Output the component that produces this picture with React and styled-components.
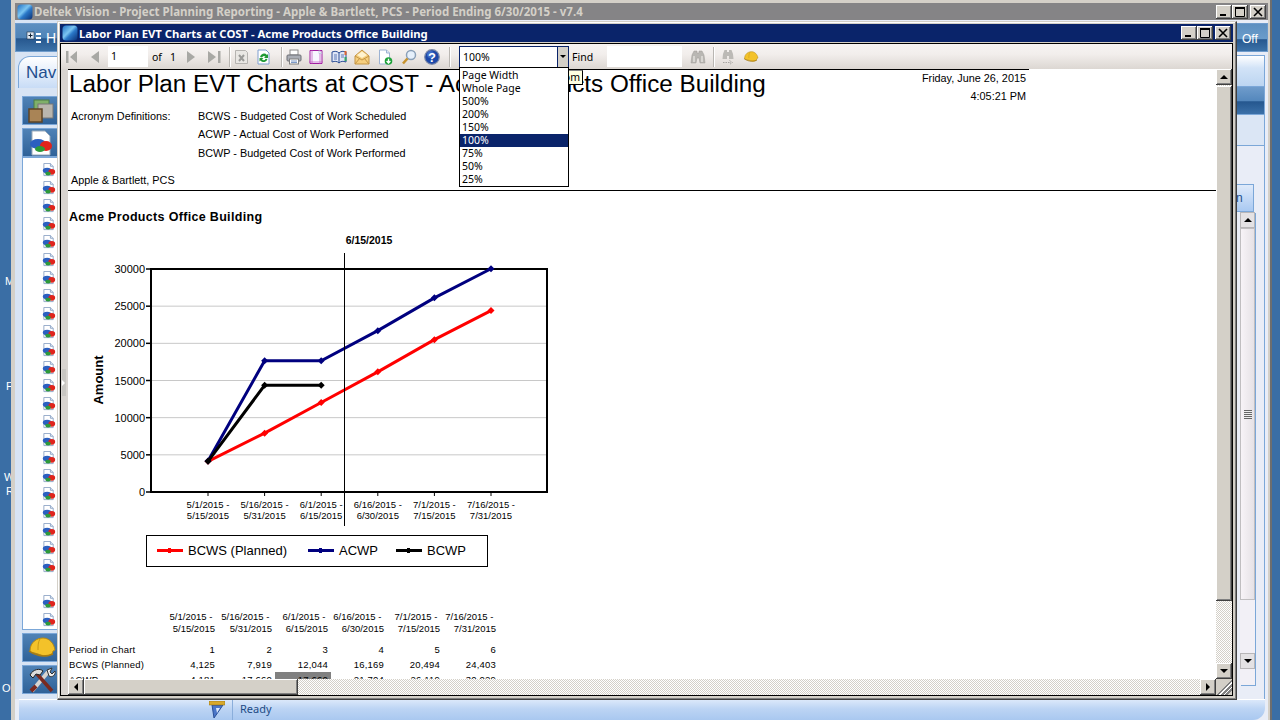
import React from "react";
import styled, { createGlobalStyle, css } from "styled-components";

const Global = createGlobalStyle`
  html, body { margin: 0; padding: 0; width: 1280px; height: 720px; overflow: hidden; background: #3a6ea5; }
  #root { width: 1280px; height: 720px; }
  * { box-sizing: border-box; }
`;

const SANS = `"Liberation Sans", Arial, sans-serif`;
const TAHOMA = `"Noto Sans", "Open Sans", sans-serif`;

const bevel = css`
  background: #d4d0c8;
  box-shadow: inset -1px -1px 0 #404040, inset 1px 1px 0 #fff, inset -2px -2px 0 #808080;
`;
const dither = css`
  background-color: #fff;
  background-image: conic-gradient(#d4d0c8 25%, #fff 0 50%, #d4d0c8 0 75%, #fff 0);
  background-size: 2px 2px;
`;

const Desktop = styled.div`
  position: relative;
  width: 1280px;
  height: 720px;
  display: flex;
  background: #3a6ea5;
  overflow: hidden;
  font-family: ${SANS};
`;
const DesktopStrip = styled.div`
  width: 11px;
  flex: none;
  display: flex;
  flex-direction: column;
  color: #fff;
  font: 11px ${SANS};
  line-height: 14px;
`;
const StripLetter = styled.span`
  margin-top: ${p => p.$top}px;
  margin-left: ${p => p.$left}px;
  height: 14px;
`;

const AppWindow = styled.div`
  width: 1259px;
  flex: none;
  display: flex;
  flex-direction: column;
  background: #e9edf7;
  border-left: 4px solid #d4d0c8;
  border-right: 2px solid #d4d0c8;
  border-top: 3px solid #d4d0c8;
`;
const WindowEdge = styled.div`
  width: 2px;
  flex: none;
  background: #6e6e6e;
`;
const AppTitle = styled.div`
  height: 17px;
  flex: none;
  background: #858486;
  display: flex;
  align-items: center;
  padding-left: 2px;
  color: #d4d0c8;
  font: bold 11.5px ${TAHOMA};
`;
const Logo = styled.svg`
  width: 16px;
  height: 16px;
  flex: none;
  margin-right: 1px;
`;
const TitleText = styled.span`
  flex: 1;
  white-space: nowrap;
`;
const CaptionButtons = styled.div`
  display: flex;
  align-items: center;
  margin-right: 2px;
`;
const CaptionButton = styled.div`
  ${bevel}
  width: 16px;
  height: 14px;
  margin-left: ${p => p.$gap || 0}px;
  display: flex;
  align-items: center;
  justify-content: center;
`;

const AppBody = styled.div`
  flex: 1;
  display: flex;
  min-height: 0;
  background: #e9edf7;
`;
const NavColumn = styled.div`
  width: 49px;
  flex: none;
  padding: 3px 0 0 0;
  display: flex;
  flex-direction: column;
  background: #d8e4f4;
  overflow: hidden;
`;
const NavTop = styled.div`
  height: 29px;
  flex: none;
  background: linear-gradient(#5d8fc0 0%, #4f84b8 50%, #27588f 55%, #3c72a8 100%);
  border: 1px solid #6f9ccc;
  color: #fff;
  font: 14px ${SANS};
  display: flex;
  align-items: center;
  padding-left: 10px;
  gap: 4px;
  white-space: nowrap;
`;
const NavTab = styled.div`
  height: 32px;
  margin: 4px 0 0 3px;
  flex: none;
  border: 1px solid #7ba7d8;
  border-bottom: none;
  border-radius: 12px 0 0 0;
  background: linear-gradient(#fff, #c8dcf6);
  color: #1f4e8e;
  font: 17px ${SANS};
  padding: 6px 0 0 7px;
  white-space: nowrap;
`;
const NavPane = styled.div`
  flex: 1;
  margin: 8px 0 0 7px;
  display: flex;
  flex-direction: column;
  min-height: 0;
`;
const NavIconButton = styled.div`
  height: ${p => p.$h || 29}px;
  flex: none;
  margin-bottom: ${p => p.$mb ?? 3}px;
  background: linear-gradient(#4f82b6, #2f6298);
  border: 1px solid #7ba7d8;
  display: flex;
  align-items: center;
  padding-left: 4px;
`;
const NavList = styled.div`
  height: 473px;
  flex: none;
  margin: -3px 0 3px 0;
  background: #fff;
  border: 1px solid #7ba7d8;
  display: flex;
  flex-direction: column;
  padding: 5px 0 0 19px;
`;
const NavListItem = styled.div`
  height: 18px;
  flex: none;
  margin-top: ${p => p.$gap || 0}px;
`;

const Center = styled.div`
  flex: 1;
`;
const RightColumn = styled.div`
  width: 32px;
  flex: none;
  display: flex;
  flex-direction: column;
  padding-top: 3px;
  overflow: hidden;
  background: #e9edf7;
`;
const OffButton = styled.div`
  height: 29px;
  flex: none;
  background: linear-gradient(#5d8fc0 0%, #6a9cca 55%, #27588f 58%, #3c72a8 100%);
  border: 1px solid #6f9ccc;
  color: #fff;
  font: 12px ${SANS};
  padding: 8px 0 0 5px;
`;
const RightPanel = styled.div`
  flex: 1;
  margin: 3px 3px 0 0;
  border-right: 1px solid #7ba7d8;
  border-top: 1px solid #7ba7d8;
  display: flex;
  flex-direction: column;
  background: #e9edf7;
`;
const RightBandLight = styled.div`
  height: 31px;
  flex: none;
  background: linear-gradient(#fff, #d2e3f7 40%, #bcd5f1);
  border-bottom: 1px solid #7ba7d8;
`;
const RightBandDark = styled.div`
  height: 28px;
  flex: none;
  background: linear-gradient(#6f9ccb, #5588bd 50%, #25578f 55%, #3b70a8);
  border-bottom: 1px solid #7ba7d8;
`;
const RightBandPale = styled.div`
  height: 31px;
  flex: none;
  background: #dbe6f5;
  border-bottom: 1px solid #7ba7d8;
`;
const RightTabArea = styled.div`
  flex: 1;
  padding: 38px 10px 0 0;
  display: flex;
  flex-direction: column;
`;
const RightTab = styled.div`
  height: 28px;
  flex: none;
  background: linear-gradient(#dfeafa, #a9c9f2);
  border: 1px solid #7ba7d8;
  border-left: none;
  color: #1f4e8e;
  font: 12px ${SANS};
  padding: 6px 0 0 0;
`;
const RightScrollTrack = styled.div`
  height: 473px;
  flex: none;
  margin-left: 4px;
  width: 15px;
  background: #f2f0f6;
  display: flex;
  flex-direction: column;
  box-shadow: 1px 1px 0 #7ba7d8;
`;
const RightScrollBtn = styled.div`
  height: 16px;
  flex: none;
  background: #e4e2e4;
  border: 1px solid #b8b6b8;
  color: #555;
  display: flex;
  align-items: center;
  justify-content: center;
`;
const RightScrollThumb = styled.div`
  height: 372px;
  flex: none;
  background: linear-gradient(90deg, #f7f3f7, #e6e2e6);
  border: 1px solid #c0bec0;
  display: flex;
  align-items: center;
  justify-content: center;
`;
const ThumbGrip = styled.div`
  width: 8px;
  height: 9px;
  background: repeating-linear-gradient(#666 0 1px, #eee 1px 2px);
`;
const RightScrollRest = styled.div`
  height: ${p => p.$h}px;
  flex: none;
`;

const StatusBar = styled.div`
  height: 21px;
  flex: none;
  margin: 0 3px 0 4px;
  border-radius: 0 0 12px 0;
  background: linear-gradient(#dbe8fa, #bcd4f4 45%, #a9c8f0);
  border-top: 1px solid #fff;
  display: flex;
  align-items: center;
  color: #1d4b85;
  font: 11px ${TAHOMA};
`;
const StatusCorner = styled.div`
  width: 214px;
  height: 100%;
  flex: none;
  border-right: 1px solid #8aaedb;
  display: flex;
  justify-content: flex-end;
  align-items: center;
  padding-right: 7px;
`;
const StatusText = styled.span`
  padding: 0 0 4px 7px;
`;

/* ---- modal child window ---- */
const ChildWindow = styled.div`
  position: absolute;
  left: 57px;
  top: 21px;
  width: 1180px;
  height: 679px;
  background: #d4d0c8;
  border: 1px solid #d4d0c8;
  border-right-color: #404040;
  border-bottom-color: #404040;
  box-shadow: inset -1px -1px 0 #808080, inset 1px 1px 0 #fff;
  padding: 2px 3px 3px 2px;
  display: flex;
  flex-direction: column;
`;
const ChildTitle = styled.div`
  height: 18px;
  flex: none;
  background: #0a246a;
  color: #fff;
  font: bold 11.3px ${TAHOMA};
  display: flex;
  align-items: center;
  padding-left: 2px;
`;
const ChildInner = styled.div`
  flex: 1;
  min-height: 0;
  margin-top: 1px;
  border: 1px solid #000;
  display: flex;
  flex-direction: column;
  background: #d8d4d0;
  position: relative;
`;
const Toolbar = styled.div`
  height: 25px;
  flex: none;
  background: linear-gradient(#f7f4f2, #f2eeec 40%, #dcd7d2);
  display: flex;
  align-items: center;
  font: 10.5px ${TAHOMA};
  color: #000;
`;
const ToolIcon = styled.svg`
  flex: none;
  margin-left: ${p => p.$ml || 0}px;
  width: 16px;
  height: 16px;
`;
const ToolSep = styled.div`
  width: 2px;
  height: 20px;
  flex: none;
  margin-left: ${p => p.$ml || 0}px;
  border-left: 1px solid #b9b6b2;
  border-right: 1px solid #fff;
`;
const PageInput = styled.div`
  width: ${p => p.$w}px;
  height: 21px;
  flex: none;
  margin-left: ${p => p.$ml || 0}px;
  background: #fff;
  padding: 3px 0 0 3px;
  line-height: 15px;
`;
const ToolLabel = styled.span`
  flex: none;
  width: ${p => p.$w}px;
  margin-left: ${p => p.$ml || 0}px;
`;
const Combo = styled.div`
  position: relative;
  flex: none;
  margin-left: ${p => p.$ml || 0}px;
  width: 110px;
  height: 22px;
  background: #fff;
  border: 1px solid #0a246a;
  display: flex;
  padding-left: 3px;
  align-items: center;
  justify-content: space-between;
`;
const ComboArrow = styled.div`
  width: 11px;
  height: 20px;
  background: #d4d0c8;
  border-left: 1px solid #0a246a;
  display: flex;
  align-items: center;
  justify-content: center;
`;
const DownTri = styled.i`
  width: 0;
  height: 0;
  border-left: 3px solid transparent;
  border-right: 3px solid transparent;
  border-top: 3px solid #000;
`;
const Dropdown = styled.ul`
  position: absolute;
  left: -1px;
  top: 20px;
  width: 110px;
  height: 120px;
  margin: 0;
  padding: 1px 0 0 0;
  list-style: none;
  background: #fff;
  border: 1px solid #000;
  z-index: 5;
`;
const DropItem = styled.li`
  height: 13px;
  line-height: 13px;
  padding-left: 2px;
  background: ${p => (p.$on ? "#0a246a" : "transparent")};
  color: ${p => (p.$on ? "#fff" : "#000")};
`;
const Tip = styled.div`
  position: absolute;
  left: 68px;
  top: 23px;
  height: 15px;
  width: 55px;
  background: #ffffe1;
  border: 1px solid #000;
  border-top-color: #888;
  text-align: right;
  padding-right: 2px;
  line-height: 13px;
  z-index: 3;
`;

const ReportRow = styled.div`
  flex: 1;
  min-height: 0;
  display: flex;
  padding-left: 7px;
`;
const ReportColumn = styled.div`
  flex: 1;
  min-width: 0;
  display: flex;
  flex-direction: column;
`;
const ReportView = styled.div`
  flex: 1;
  min-height: 0;
  background: #fff;
  overflow: hidden;
  display: flex;
  flex-direction: column;
  position: relative;
  color: #000;
`;
const ReportHeader = styled.div`
  width: 961px;
  height: 121px;
  flex: none;
  border-top: 1px solid #000;
  display: flex;
  justify-content: space-between;
`;
const HeaderLeft = styled.div`
  padding: 0 0 0 1px;
`;
const ReportTitle = styled.h1`
  margin: 0;
  font: 400 24.25px/28px ${SANS};
  white-space: nowrap;
`;
const AcronymGrid = styled.div`
  display: grid;
  grid-template-columns: 127px auto;
  margin: 9px 0 0 2px;
  font: 10.85px/13px ${SANS};
  grid-auto-rows: 18.5px;
  align-items: center;
`;
const Firm = styled.div`
  margin: 11px 0 0 2px;
  font: 10.85px/13px ${SANS};
`;
const StampBlock = styled.div`
  text-align: right;
  margin-top: -1px;
  padding: 0 3px 0 0;
  font: 10.85px/18px ${SANS};
`;
const Rule = styled.div`
  height: 1px;
  flex: none;
  background: #000;
`;
const Project = styled.h2`
  margin: 19px 0 0 1px;
  font: bold 12.5px/15px ${SANS};
  letter-spacing: 0.32px;
  flex: none;
`;
const ChartSvg = styled.svg`
  display: block;
  flex: none;
  width: 500px;
  height: 300px;
  margin-top: 5px;
`;
const Legend = styled.div`
  flex: none;
  width: 342px;
  height: 32px;
  margin: 5px 0 0 78px;
  border: 1px solid #000;
  border-width: 1px 1.5px 1.5px 1px;
  display: flex;
  align-items: center;
  padding: 0 0 2px 10px;
  font: 13px ${SANS};
`;
const LegendEntry = styled.div`
  display: flex;
  align-items: center;
  margin-right: ${p => p.$mr}px;
  white-space: nowrap;
`;
const LegendKey = styled.span`
  position: relative;
  width: 26px;
  height: 3px;
  background: ${p => p.$c};
  margin-right: 5px;
  &::after {
    content: "";
    position: absolute;
    left: 11px;
    top: -1px;
    width: 3px;
    height: 5px;
    background: ${p => p.$c};
  }
`;
const DataTable = styled.div`
  flex: none;
  margin: 44px 0 0 1px;
  display: grid;
  grid-template-columns: 90px 56px 57px 56px 56px 56px 56px;
  font: 9.5px/12px ${SANS};
  width: 440px;
`;
const HeadCell = styled.div`
  text-align: right;
  white-space: pre;
  margin-bottom: 7px;
`;
const Cell = styled.div`
  height: 15px;
  line-height: 15px;
  text-align: right;
  white-space: nowrap;
  letter-spacing: 0.2px;
  ${p => p.$hl && "background:#808080;margin:0 -3px 0 3px;padding-right:3px;"}
`;
const LabelCell = styled(Cell)`
  text-align: left;
`;

const VScroll = styled.div`
  width: 16px;
  flex: none;
  display: flex;
  flex-direction: column;
  ${dither}
`;
const ScrollBtn = styled.div`
  ${bevel}
  flex: none;
  width: 16px;
  height: 16px;
  display: flex;
  align-items: center;
  justify-content: center;
`;
const VThumb = styled.div`
  ${bevel}
  flex: none;
  height: ${p => p.$h}px;
  margin-top: 1px;
`;
const Spacer = styled.div`
  flex: 1;
`;
const HScroll = styled.div`
  height: 16px;
  flex: none;
  display: flex;
  ${dither}
`;
const HThumb = styled.div`
  ${bevel}
  flex: none;
  width: 214px;
`;
const Grip = styled.div`
  width: 16px;
  height: 16px;
  flex: none;
  background: linear-gradient(135deg, #d4d0c8 52%, #808080 52% 58%, #fff 58% 64%, #808080 64% 72%, #fff 72% 78%, #808080 78% 86%, #d4d0c8 86%);
`;
const Tri = styled.i`
  width: 0;
  height: 0;
  ${p => p.$d === "up" && "border-left:4px solid transparent;border-right:4px solid transparent;border-bottom:4px solid #000;"}
  ${p => p.$d === "down" && "border-left:4px solid transparent;border-right:4px solid transparent;border-top:4px solid #000;"}
  ${p => p.$d === "left" && "border-top:4px solid transparent;border-bottom:4px solid transparent;border-right:4px solid #000;"}
  ${p => p.$d === "right" && "border-top:4px solid transparent;border-bottom:4px solid transparent;border-left:4px solid #000;"}
`;
const Collapse = styled.div`
  position: absolute;
  left: 1px;
  top: 325px;
  width: 4px;
  height: 27px;
  background: #c8c6c2;
  display: flex;
  align-items: center;
  &::after {
    content: "";
    border-top: 3px solid transparent;
    border-bottom: 3px solid transparent;
    border-left: 3px solid #fff;
  }
`;

/* ---- drawings ---- */
const LogoMark = ({ id }) => (
  <Logo viewBox="0 0 16 16">
    <defs>
      <linearGradient id={id} x1="0" y1="0" x2="1" y2="1">
        <stop offset="0" stopColor="#1d6fc4" />
        <stop offset="0.42" stopColor="#7cc6f2" />
        <stop offset="0.58" stopColor="#2a78c8" />
        <stop offset="1" stopColor="#0b2f72" />
      </linearGradient>
    </defs>
    <rect x="0.5" y="0.5" width="15" height="15" rx="3.5" fill={`url(#${id})`} />
  </Logo>
);
const Caption = ({ kind }) => (
  <svg width="10" height="10" viewBox="0 0 10 10">
    {kind === "min" && <rect x="1" y="7" width="6" height="2" fill="#000" />}
    {kind === "max" && <path d="M.5 1.5h9v8h-9z" fill="none" stroke="#000" strokeWidth="1" />}
    {kind === "max" && <rect y="0" width="10" height="2" fill="#000" />}
    {kind === "close" && <path d="M1 1l8 8M9 1l-8 8" stroke="#000" strokeWidth="1.6" />}
  </svg>
);
const CaptionSet = () => (
  <CaptionButtons>
    <CaptionButton><Caption kind="min" /></CaptionButton>
    <CaptionButton><Caption kind="max" /></CaptionButton>
    <CaptionButton $gap={2}><Caption kind="close" /></CaptionButton>
  </CaptionButtons>
);
const PieDoc = ({ size = 14 }) => (
  <svg width={size} height={size} viewBox="0 0 14 15" style={{ display: "block" }}>
    <path d="M1.5.5h7l3 3v10h-10z" fill="#fff" stroke="#8fa6c6" />
    <path d="M8.5.5v3h3" fill="#dfe8f4" stroke="#8fa6c6" />
    <ellipse cx="5" cy="8" rx="4.6" ry="3" fill="#2b5fc0" />
    <ellipse cx="10" cy="9.5" rx="3.6" ry="3" fill="#e0241c" />
    <ellipse cx="6" cy="11.3" rx="3" ry="2" fill="#2d9a3a" />
  </svg>
);
const PieDocLarge = () => (
  <svg width="30" height="26" viewBox="0 0 30 26">
    <path d="M5 1h13l5 5v19H5z" fill="#fff" stroke="#9ab" />
    <ellipse cx="11" cy="14" rx="8" ry="5" fill="#2b5fc0" />
    <ellipse cx="19" cy="16" rx="6" ry="5" fill="#e0241c" />
    <ellipse cx="13" cy="19" rx="5" ry="3" fill="#2d9a3a" />
  </svg>
);
const Cards = () => (
  <svg width="28" height="24" viewBox="0 0 28 24">
    <rect x="7" y="1" width="15" height="13" fill="#7fb06a" stroke="#4d7d44" />
    <rect x="11" y="5" width="15" height="14" fill="#b9b6ae" stroke="#777" />
    <rect x="2" y="10" width="13" height="13" fill="#a98456" stroke="#5d4426" strokeWidth="1.5" />
  </svg>
);
const Hat = ({ w = 30, h = 24, ml = 0 }) => (
  <svg width={w} height={h} viewBox="0 0 30 24" style={{ marginLeft: ml, flex: "none" }}>
    <path d="M3 15C3 6 10 2 16 2s11 5 12 12l-2 1-1 3c-4 3-9 2-14 0l-7-2z" fill="#f3c22a" stroke="#b88a10" />
    <path d="M13 3c-2 3-2 7-2 11" stroke="#c99a15" fill="none" />
    <path d="M2 15c5 4 14 7 24 3" stroke="#a87c10" fill="none" strokeWidth="1.5" />
  </svg>
);
const Tools = () => (
  <svg width="30" height="28" viewBox="0 0 30 28">
    <path d="M5 25L21 6" stroke="#d8d4d0" strokeWidth="4" />
    <path d="M4 25l5-5" stroke="#7a2a20" strokeWidth="4" />
    <path d="M25 25L10 8" stroke="#7a2a20" strokeWidth="3.5" />
    <path d="M3 9c3-6 10-7 13-4l-3 4-4-1-3 4z" fill="#dcdcdc" stroke="#222" />
    <path d="M20 4l5-2-2 4 2 2 3-3c1 4-3 7-6 5z" fill="#eee" stroke="#333" />
  </svg>
);

const Glyph = {
  first: <path d="M1 2h2.5v12H1zM12 2v12L5 8z" fill="#a8a8a4" />,
  prev: <path d="M11 2v12L3 8z" fill="#a8a8a4" />,
  next: <path d="M4 2v12l8-6z" fill="#a8a8a4" />,
  last: <path d="M13 2h2.5v12H13zM3 2v12l8-6z" fill="#a8a8a4" />,
  del: (
    <>
      <path d="M1.5 1.5h10l2 2v11h-12z" fill="#e9e7e4" stroke="#b5b3b0" />
      <path d="M5 6l5 6M10 6l-5 6" stroke="#9a9a98" strokeWidth="2" />
    </>
  ),
  refresh: (
    <>
      <path d="M2 1h8l3 3v11H2z" fill="#fff" stroke="#7f9fd0" />
      <path d="M4 8a4 4 0 0 1 7-2l1-1v4H8l1.5-1.4A2.4 2.4 0 0 0 6 8.5zM11.5 10a4 4 0 0 1-7 1.5l-1 1V9h4L6 10.6a2.4 2.4 0 0 0 3.6-.8z" fill="#1f9a35" />
    </>
  ),
  print: (
    <>
      <rect x="4" y="1" width="8" height="5" fill="#fff" stroke="#8a8a8a" />
      <rect x="1" y="6" width="14" height="6" rx="1" fill="#a9adb5" stroke="#6d6f75" />
      <rect x="3.5" y="10" width="9" height="5" fill="#fff" stroke="#7f7f7f" />
      <path d="M5 12h6M5 13.5h6" stroke="#7d9ac8" />
    </>
  ),
  layout: (
    <>
      <path d="M2 1.5h12v13H2z" fill="#f7f7ff" stroke="#a01fa0" />
      <path d="M4 1v14M12 1v14M1 13h14" stroke="#c050c0" strokeWidth=".7" />
      <path d="M11 1.5l3 3h-3z" fill="#fff" stroke="#a8b8d0" strokeWidth=".6" />
    </>
  ),
  book: (
    <>
      <path d="M1 3c3-1 5-1 7 1 2-2 4-2 7-1v10c-3-1-5-1-7 1-2-2-4-2-7-1z" fill="#dfe6f6" stroke="#2d4f96" />
      <path d="M8 4v10" stroke="#2d4f96" />
      <path d="M3 6h3M3 8h3M3 10h3M10 6h3M10 8h3" stroke="#5e7bb8" />
      <rect x="13.5" y="2" width="2" height="4" fill="#d63" />
      <rect x="13.5" y="8" width="2" height="4" fill="#3a6" />
    </>
  ),
  mail: (
    <>
      <path d="M1 7l7-6 7 6v8H1z" fill="#f6cf7e" stroke="#c49545" />
      <path d="M1 7l7 4 7-4M1 15l5-6M15 15l-5-6" fill="none" stroke="#c49545" />
      <path d="M3 6l5-3.5L13 6 8 9z" fill="#fff3d0" />
    </>
  ),
  plus: (
    <>
      <path d="M2.5 1h7l3 3v11h-10z" fill="#fff" stroke="#9db2d3" />
      <path d="M9.5 1v3h3" fill="#dfe8f4" stroke="#9db2d3" />
      <circle cx="11.5" cy="12" r="3.8" fill="#1ea23a" />
      <path d="M11.5 9.8v4M9.6 12l1.9 2 1.9-2" stroke="#fff" strokeWidth="1.3" fill="none" />
    </>
  ),
  lens: (
    <>
      <circle cx="10" cy="6" r="4.5" fill="#e6f0fb" stroke="#8aa0b8" strokeWidth="1.5" />
      <path d="M6.5 9.5L2 14.5" stroke="#c8942f" strokeWidth="2.6" />
    </>
  ),
  help: (
    <>
      <circle cx="8" cy="8" r="7.3" fill="#1d48a8" stroke="#7d8aa8" strokeWidth="1.2" />
      <circle cx="6.5" cy="5.5" r="3.5" fill="#5d88dc" opacity=".55" />
    </>
  ),
  binos: (
    <>
      <path d="M2 6l2-4h3v2h2V2h3l2 4 1 8h-5l-1-5H7l-1 5H1z" fill="#b9b7b3" stroke="#9c9a96" strokeWidth=".5" />
      <path d="M4 7v6M12 7v6" stroke="#d8d6d2" strokeWidth="2" />
    </>
  ),
  binoNext: (
    <>
      <path d="M3 5l1.5-4H7v2h2V1h2.5L13 5l.5 5H9V7H7v3H2.5z" fill="#bcbab6" />
      <path d="M3 13.5h8M9.5 11.5l3 2-3 2" stroke="#a5a3a0" fill="none" strokeDasharray="1.5 1" />
    </>
  ),
};
const TI = ({ name, ml, children }) => (
  <ToolIcon viewBox="0 0 16 16" $ml={ml}>
    {Glyph[name]}
    {children}
  </ToolIcon>
);

const periods = [
  ["5/1/2015 - ", "5/15/2015"],
  ["5/16/2015 - ", "5/31/2015"],
  ["6/1/2015 - ", "6/15/2015"],
  ["6/16/2015 - ", "6/30/2015"],
  ["7/1/2015 - ", "7/15/2015"],
  ["7/16/2015 - ", "7/31/2015"],
];
const rows = [
  ["Period in Chart", "1", "2", "3", "4", "5", "6"],
  ["BCWS (Planned)", "4,125", "7,919", "12,044", "16,169", "20,494", "24,403"],
  ["ACWP", "4,181", "17,660", "17,660", "21,704", "26,119", "30,029"],
];
const zooms = ["Page Width", "Whole Page", "500%", "200%", "150%", "100%", "75%", "50%", "25%"];

const px = i => 208 + 56.6 * i - 68;
const py = v => 492 - 230 - (v / 30000) * 223;
const series = [
  { c: "#ff0000", v: [4125, 7919, 12044, 16169, 20494, 24403] },
  { c: "#00007f", v: [4181, 17660, 17660, 21704, 26119, 30029] },
  { c: "#000000", v: [4125, 14350, 14350] },
];

const Chart = () => (
  <ChartSvg viewBox="0 0 500 300">
    <text x="301" y="14" textAnchor="middle" fontFamily={SANS} fontSize="10.5" fontWeight="700">6/15/2015</text>
    {[5000, 10000, 15000, 20000, 25000].map(v => (
      <line key={v} x1="83" x2="479" y1={py(v)} y2={py(v)} stroke="#c8c8c8" />
    ))}
    <rect x="83" y="39" width="396" height="223" fill="none" stroke="#000" strokeWidth="2" />
    {[0, 5000, 10000, 15000, 20000, 25000, 30000].map(v => (
      <g key={v}>
        <line x1="78" x2="83" y1={py(v)} y2={py(v)} stroke="#000" strokeWidth="1.5" />
        <text x="77" y={py(v) + 4} textAnchor="end" fontFamily={SANS} fontSize="11">{v}</text>
      </g>
    ))}
    {periods.map((p, i) => (
      <g key={i}>
        <line x1={px(i)} x2={px(i)} y1="262" y2="266" stroke="#000" />
        <text x={px(i)} y="278" textAnchor="middle" fontFamily={SANS} fontSize="9.5">{p[0].trim()}</text>
        <text x={px(i)} y="289" textAnchor="middle" fontFamily={SANS} fontSize="9.5">{p[1]}</text>
      </g>
    ))}
    <text transform="translate(35 150) rotate(-90)" textAnchor="middle" fontFamily={SANS} fontSize="13" fontWeight="700">Amount</text>
    {series.map((s, k) => (
      <g key={k}>
        <polyline points={s.v.map((v, i) => `${px(i)},${py(v)}`).join(" ")} fill="none" stroke={s.c} strokeWidth="3" />
        {s.v.map((v, i) => (
          <path key={i} d={`M${px(i) - 3.5} ${py(v)}l3.5 -3.5 3.5 3.5 -3.5 3.5z`} fill={s.c} />
        ))}
      </g>
    ))}
    <line x1="276.5" x2="276.5" y1="23" y2="296" stroke="#000" />
  </ChartSvg>
);

const leftIcons = Array.from({ length: 23 });

export default function App() {
  return (
    <Desktop>
      <Global />
      <DesktopStrip>
        <StripLetter $top={274} $left={5}>M</StripLetter>
        <StripLetter $top={91} $left={6}>F</StripLetter>
        <StripLetter $top={77} $left={4}>W</StripLetter>
        <StripLetter $top={0} $left={6}>R</StripLetter>
        <StripLetter $top={183} $left={2}>O</StripLetter>
      </DesktopStrip>
      <AppWindow>
        <AppTitle>
          <LogoMark id="lga" />
          <TitleText>Deltek Vision - Project Planning Reporting - Apple &amp; Bartlett, PCS - Period Ending 6/30/2015 - v7.4</TitleText>
          <CaptionSet />
        </AppTitle>
        <AppBody>
          <NavColumn>
            <NavTop>
              <svg width="16" height="16" viewBox="0 0 16 16">
                <rect x="1" y="2" width="7" height="7" fill="#dfe8f4" stroke="#234" strokeWidth=".6" />
                <path d="M2.5 5.5h4M4.5 3.5v4" stroke="#123" />
                <path d="M10 4h5M10 8h5M10 12h5" stroke="#fff" strokeWidth="2" />
              </svg>
              H
            </NavTop>
            <NavTab>Nav</NavTab>
            <NavPane>
              <NavIconButton><Cards /></NavIconButton>
              <NavIconButton><PieDocLarge /></NavIconButton>
              <NavList>
                {leftIcons.map((_, i) => (
                  <NavListItem key={i}><PieDoc /></NavListItem>
                ))}
                <NavListItem $gap={18}><PieDoc /></NavListItem>
                <NavListItem><PieDoc /></NavListItem>
              </NavList>
              <NavIconButton><Hat /></NavIconButton>
              <NavIconButton $mb={0}><Tools /></NavIconButton>
            </NavPane>
          </NavColumn>
          <Center />
          <RightColumn>
            <OffButton>Off</OffButton>
            <RightPanel>
              <RightBandLight />
              <RightBandDark />
              <RightBandPale />
              <RightTabArea>
                <RightTab>n</RightTab>
                <RightScrollTrack>
                  <RightScrollBtn><Tri $d="up" /></RightScrollBtn>
                  <RightScrollThumb><ThumbGrip /></RightScrollThumb>
                  <RightScrollRest $h={53} />
                  <RightScrollBtn><Tri $d="down" /></RightScrollBtn>
                  <RightScrollRest $h={16} />
                </RightScrollTrack>
              </RightTabArea>
            </RightPanel>
          </RightColumn>
        </AppBody>
        <StatusBar>
          <StatusCorner>
            <svg width="16" height="18" viewBox="0 0 16 18">
              <path d="M3 4l11 0-9 13z" fill="#4a76c8" stroke="#2a4f98" />
              <path d="M7 7l4 0-3 5z" fill="#dbe8fa" />
              <rect x="0" y="0" width="16" height="4" fill="#d8a92c" stroke="#8a6a10" strokeWidth=".5" />
            </svg>
          </StatusCorner>
          <StatusText>Ready</StatusText>
        </StatusBar>
      </AppWindow>
      <WindowEdge />

      <ChildWindow>
        <ChildTitle>
          <LogoMark id="lgc" />
          <TitleText>Labor Plan EVT Charts at COST - Acme Products Office Building</TitleText>
          <CaptionSet />
        </ChildTitle>
        <ChildInner>
          <Toolbar>
            <TI name="first" ml={4} />
            <TI name="prev" ml={7} />
            <PageInput $w={40} $ml={4}>1</PageInput>
            <ToolLabel $ml={4} $w={18}>of</ToolLabel>
            <ToolLabel $w={13}>1</ToolLabel>
            <TI name="next" />
            <TI name="last" ml={6} />
            <ToolSep $ml={8} />
            <TI name="del" ml={3} />
            <TI name="refresh" ml={6} />
            <ToolSep $ml={9} />
            <TI name="print" ml={3} />
            <TI name="layout" ml={6} />
            <TI name="book" ml={7} />
            <TI name="mail" ml={7} />
            <TI name="plus" ml={7} />
            <TI name="lens" ml={8} />
            <TI name="help" ml={7}>
              <text x="8" y="12.5" textAnchor="middle" fontFamily={SANS} fontSize="13" fontWeight="700" fill="#fff">?</text>
            </TI>
            <ToolSep $ml={9} />
            <Combo $ml={8}>
              100%
              <ComboArrow><DownTri /></ComboArrow>
              <Tip>Zoom</Tip>
              <Dropdown>
                {zooms.map(z => (
                  <DropItem key={z} $on={z === "100%"}>{z}</DropItem>
                ))}
              </Dropdown>
            </Combo>
            <ToolLabel $ml={3} $w={35}>Find</ToolLabel>
            <PageInput $w={75} />
            <TI name="binos" ml={8} />
            <ToolSep $ml={7} />
            <TI name="binoNext" ml={5} />
            <Hat w={16} h={14} ml={7} />
          </Toolbar>
          <Collapse />
          <ReportRow>
            <ReportColumn>
              <ReportView>
                <ReportHeader>
                  <HeaderLeft>
                    <ReportTitle>Labor Plan EVT Charts at COST - Acme Products Office Building</ReportTitle>
                    <AcronymGrid>
                      <span>Acronym Definitions:</span>
                      <span>BCWS - Budgeted Cost of Work Scheduled</span>
                      <span />
                      <span>ACWP - Actual Cost of Work Performed</span>
                      <span />
                      <span>BCWP - Budgeted Cost of Work Performed</span>
                    </AcronymGrid>
                    <Firm>Apple &amp; Bartlett, PCS</Firm>
                  </HeaderLeft>
                  <StampBlock>
                    Friday, June 26, 2015
                    <br />
                    4:05:21 PM
                  </StampBlock>
                </ReportHeader>
                <Rule />
                <Project>Acme Products Office Building</Project>
                <Chart />
                <Legend>
                  <LegendEntry $mr={21}><LegendKey $c="#ff0000" />BCWS (Planned)</LegendEntry>
                  <LegendEntry $mr={18}><LegendKey $c="#00007f" />ACWP</LegendEntry>
                  <LegendEntry $mr={0}><LegendKey $c="#000" />BCWP</LegendEntry>
                </Legend>
                <DataTable>
                  <HeadCell />
                  {periods.map((p, i) => (
                    <HeadCell key={i}>{p[0]}{"\n"}{p[1]}</HeadCell>
                  ))}
                  {rows.map((r, ri) => (
                    <React.Fragment key={ri}>
                      <LabelCell>{r[0]}</LabelCell>
                      {r.slice(1).map((c, ci) => (
                        <Cell key={ci} $hl={ri === 2 && ci === 2}>{c}</Cell>
                      ))}
                    </React.Fragment>
                  ))}
                </DataTable>
              </ReportView>
              <HScroll>
                <ScrollBtn><Tri $d="left" /></ScrollBtn>
                <HThumb />
                <Spacer />
                <ScrollBtn><Tri $d="right" /></ScrollBtn>
              </HScroll>
            </ReportColumn>
            <VScroll>
              <ScrollBtn><Tri $d="up" /></ScrollBtn>
              <VThumb $h={515} />
              <Spacer />
              <ScrollBtn><Tri $d="down" /></ScrollBtn>
              <Grip />
            </VScroll>
          </ReportRow>
        </ChildInner>
      </ChildWindow>
    </Desktop>
  );
}
